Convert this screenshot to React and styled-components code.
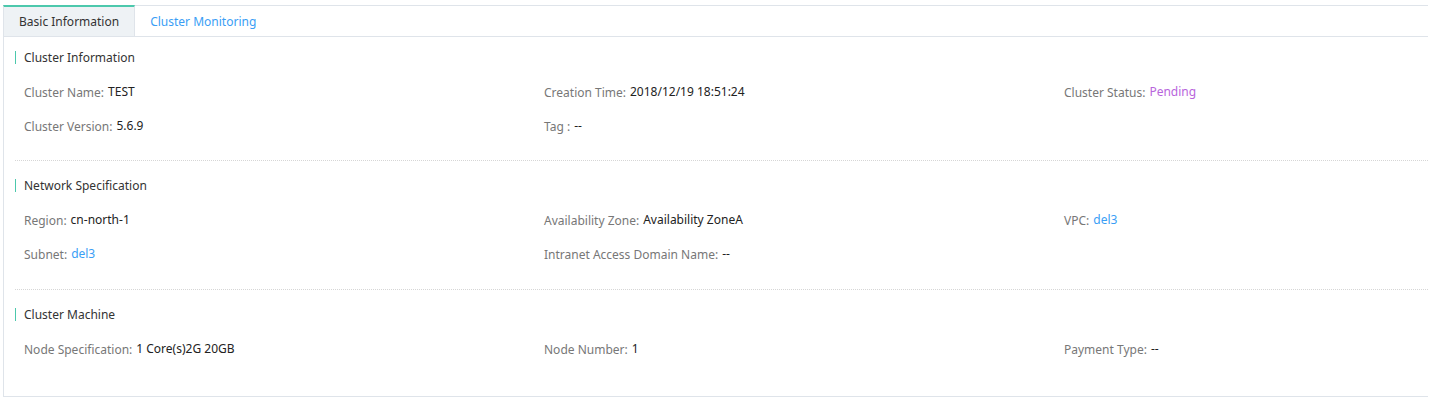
import React from "react";
import styled, { createGlobalStyle } from "styled-components";

const Global = createGlobalStyle`
  html, body { margin: 0; padding: 0; background: #fff; }
  body { font-family: "Noto Sans", "Liberation Sans", Arial, sans-serif; }
`;

const Page = styled.div`
  padding: 5px 1px 0 3px;
`;

const Panel = styled.div`
  border-left: 1px solid #dfe4ea;
  border-bottom: 1px solid #dfe4ea;
  height: 392px;
  box-sizing: border-box;
`;

const TabBar = styled.div`
  display: flex;
  height: 32px;
  box-sizing: border-box;
  border-top: 1px solid #dfe4ea;
  border-bottom: 1px solid #dfe4ea;
  margin-left: -1px;
`;

const Tab = styled.div`
  display: flex;
  align-items: center;
  padding: 0 15px;
  margin-top: ${(p) => (p.$active ? "-1px" : "0")};
  height: ${(p) => (p.$active ? "31px" : "30px")};
  box-sizing: border-box;
  font-size: 12px;
  color: ${(p) => (p.$active ? "#333" : "#3a9ef5")};
  background: ${(p) => (p.$active ? "#eef2f5" : "transparent")};
  border-top: ${(p) => (p.$active ? "2px solid #4cc8ac" : "none")};
  border-left: ${(p) => (p.$active ? "1px solid #dfe4ea" : "none")};
  border-right: ${(p) => (p.$active ? "1px solid #dfe4ea" : "none")};
`;

const Section = styled.div`
  margin-left: 11px;
  padding: ${(p) => (p.$first ? "10px 0 17px" : p.$last ? "14px 0 0" : "14px 0 18px")};
  border-bottom: ${(p) => (p.$last ? "none" : "1px dotted #d6d6d6")};
`;

const Title = styled.div`
  display: flex;
  align-items: center;
  height: 20px;
  margin-bottom: 8px;
  font-size: 12px;
  color: #333;
  &::before {
    content: "";
    width: 1px;
    height: 13px;
    background: #4cc8ac;
    margin-right: 8px;
  }
`;

const Grid = styled.div`
  display: grid;
  grid-template-columns: 520px 520px 1fr;
  padding-left: 9px;
`;

const Item = styled.div`
  height: 34px;
  display: flex;
  align-items: center;
  white-space: nowrap;
`;

const Label = styled.span`
  font-size: 12px;
  color: #777;
  margin-right: 4px;
`;

const Value = styled.span`
  font-size: 12px;
  color: ${(p) => (p.$tone === "link" ? "#3a9ef5" : p.$tone === "pending" ? "#b865dc" : "#222")};
  position: relative;
  top: -1px;
`;

const sections = [
  {
    title: "Cluster Information",
    items: [
      ["Cluster Name:", "TEST"],
      ["Creation Time:", "2018/12/19 18:51:24"],
      ["Cluster Status:", "Pending", "pending"],
      ["Cluster Version:", "5.6.9"],
      ["Tag :", "--"],
    ],
  },
  {
    title: "Network Specification",
    items: [
      ["Region:", "cn-north-1"],
      ["Availability Zone:", "Availability ZoneA"],
      ["VPC:", "del3", "link"],
      ["Subnet:", "del3", "link"],
      ["Intranet Access Domain Name:", "--"],
    ],
  },
  {
    title: "Cluster Machine",
    items: [
      ["Node Specification:", "1 Core(s)2G 20GB"],
      ["Node Number:", "1"],
      ["Payment Type:", "--"],
    ],
  },
];

export default function App() {
  return (
    <>
      <Global />
      <Page>
        <Panel>
          <TabBar>
            <Tab $active>Basic Information</Tab>
            <Tab>Cluster Monitoring</Tab>
          </TabBar>
          {sections.map((s, i) => (
            <Section key={s.title} $first={i === 0} $last={i === sections.length - 1}>
              <Title>{s.title}</Title>
              <Grid>
                {s.items.map(([l, v, tone]) => (
                  <Item key={l}>
                    <Label>{l}</Label>
                    <Value $tone={tone}>{v}</Value>
                  </Item>
                ))}
              </Grid>
            </Section>
          ))}
        </Panel>
      </Page>
    </>
  );
}
